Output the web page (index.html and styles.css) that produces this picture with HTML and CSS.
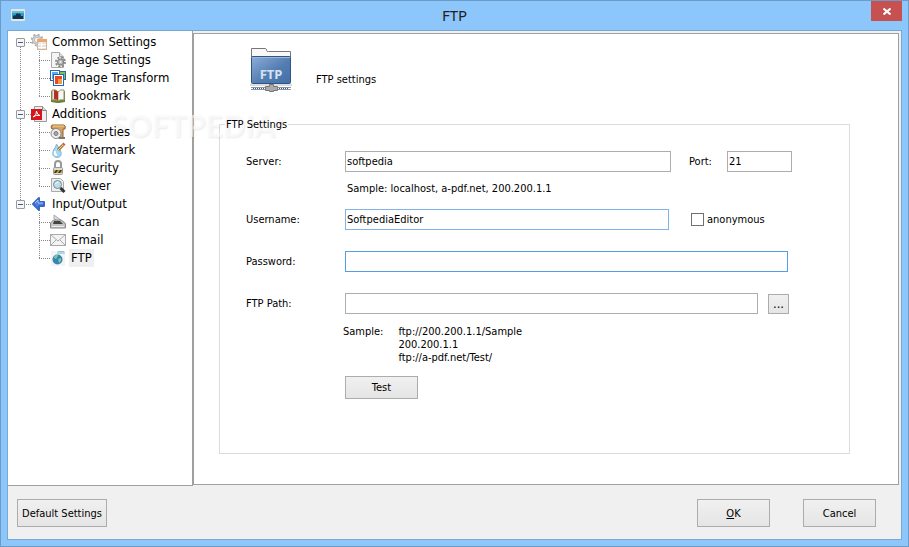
FILE: index.html
```html
<!DOCTYPE html>
<html lang="en">
<head>
<meta charset="utf-8">
<title>FTP</title>
<link rel="stylesheet" href="styles.css">
</head>
<body>
<div class="window">
  <header class="titlebar">
    <svg class="app-icon" viewBox="0 0 14 12"><rect width="14" height="12" rx="1" fill="#e8e6e0"/><rect x="1" y="2" width="12" height="8" fill="#2f9cc8"/><rect x="1" y="2" width="12" height="2" fill="#68bedc"/><path d="M2 10V7l2-1v1l2-3 2 1 1-1 1 3 2 0v3z" fill="#12344d"/></svg>
    <h1 class="title">FTP</h1>
    <button class="close" aria-label="Close"><svg viewBox="0 0 8 7"><path d="M0.500 0.500L7.500 6.500M7.500 0.500L0.500 6.500" stroke="#fff" stroke-width="2"/></svg></button>
  </header>
  <div class="client">
    <div class="main">
      <nav class="tree" aria-label="Settings">
        <ul class="roots">
          <li class="root">
            <div class="row"><span class="toggle"></span><svg class="icon" viewBox="0 0 16 16"><circle cx="6" cy="6" r="5.500" fill="none" stroke="#b0b0b0" stroke-width="2" stroke-dasharray="2 2.300"/><circle cx="6" cy="6" r="3.500" fill="none" stroke="#b5b5b5" stroke-width="3"/><circle cx="6" cy="6" r="3.500" fill="none" stroke="#dcdcdc"/><rect x="6.500" y="5.500" width="9" height="10" fill="#e8e1dc" stroke="#d3b49e"/><rect x="6" y="5" width="10" height="3" fill="#f0a468"/><path d="M7 10.500h8M7 13.500h8M10.500 8v7" stroke="#fff"/></svg><span class="label">Common Settings</span></div>
            <ul class="branch">
              <li class="row"><svg class="icon" viewBox="0 0 16 16"><path d="M1.500 .5h8l4 4v11h-12z" fill="#f4f4f4" stroke="#aaa"/><path d="M9.500 .5v4h4" fill="#ddd" stroke="#aaa"/><circle cx="10.500" cy="10" r="4.500" fill="none" stroke="#888" stroke-width="2" stroke-dasharray="2 1.500"/><circle cx="10.500" cy="10" r="3" fill="#bbb" stroke="#777"/><circle cx="10.500" cy="10" r="1" fill="#eee"/></svg><span class="label">Page Settings</span></li>
              <li class="row"><svg class="icon" viewBox="0 0 16 16"><rect x="8.500" y="1.500" width="7" height="8" fill="#7ac450" stroke="#2b62a8"/><rect x=".5" y=".5" width="9" height="10" fill="#fff" stroke="#2868b0"/><rect x="2" y="2" width="6" height="7" fill="#58aee8"/><rect x="3.500" y="4.500" width="10" height="11" fill="#fff" stroke="#2868b0"/><rect x="5" y="6" width="7" height="8" fill="#e84a26"/><path d="M8 9h4v5H8z" fill="#f79a42"/></svg><span class="label">Image Transform</span></li>
              <li class="row"><svg class="icon" viewBox="0 0 16 16"><path d="M1 3l6 1 1 1 1-1 6-1v11l-6 1H7l-6-1z" fill="#66852f"/><path d="M2 2q4-1 6 2v9q-2-2-6-1z" fill="#e9e7d8" stroke="#998f70"/><path d="M8 4q2-3 6-2v10q-4-1-6 1z" fill="#f8f8ef" stroke="#998f70"/><path d="M4 2q3 0 4 2v9q-1-2-4-2z" fill="#b53024"/></svg><span class="label">Bookmark</span></li>
            </ul>
          </li>
          <li class="root">
            <div class="row"><span class="toggle"></span><svg class="icon" viewBox="0 0 16 16"><path d="M3.500 .5h8l4 4v11h-12z" fill="#eee" stroke="#999"/><path d="M11.500 .5v4h4" fill="#ddd" stroke="#888"/><rect x="0" y="3" width="11" height="11" fill="#d4151b"/><path d="M2 11Q6 9 5.500 5Q6 9 9 9.500Q5 8.500 2 11z" fill="none" stroke="#fff"/></svg><span class="label">Additions</span></div>
            <ul class="branch">
              <li class="row"><svg class="icon" viewBox="0 0 16 16"><path d="M2 1h12q2 1 1 4h-2v9H8V5H2q-2-2 0-4z" fill="#d8a45c" stroke="#8b6230"/><path d="M3 2h11" stroke="#f2cf91"/><circle cx="6" cy="9.500" r="5" fill="#eee" stroke="#888"/><circle cx="6" cy="9.500" r="2" fill="#aaa" stroke="#777"/><path d="M9 14h6" stroke="#777" stroke-width="2"/></svg><span class="label">Properties</span></li>
              <li class="row"><svg class="icon" viewBox="0 0 16 16"><path d="M6.500 2Q6 5 3.500 8Q1 15 7 15.500Q13 15 10.500 8.500z" fill="#a5d6f2" stroke="#7ab4dc"/><path d="M5 9q-1 4 2 4" fill="none" stroke="#fff" stroke-width="2"/><path d="M8 8l5-5" stroke="#a07c38" stroke-width="3"/><path d="M8 8l5-5" stroke="#f4d06c"/><path d="M13 3l1.500-1.500" stroke="#da5d4b" stroke-width="3"/></svg><span class="label">Watermark</span></li>
              <li class="row"><svg class="icon" viewBox="0 0 16 16"><path d="M5 8V4q0-3 3-3t3 3v4" fill="none" stroke="#999" stroke-width="2"/><rect x="3.500" y="7.500" width="9" height="7" rx="1" fill="#dfdccb" stroke="#999"/><path d="M4 10h8v3H4z" fill="#c8a43d"/><path d="M4 13l2-3h2l-2 3zm4 0l2-3h2l-2 3z" fill="#333"/></svg><span class="label">Security</span></li>
              <li class="row"><svg class="icon" viewBox="0 0 16 16"><path d="M1.500 .5h9l3 3v10h-12z" fill="#eee" stroke="#aaa"/><circle cx="7.500" cy="6.500" r="4" fill="#b9dfea" stroke="#7a898f"/><path d="M5.500 6q1-2 3-2" fill="none" stroke="#fff"/><path d="M10.500 10l4 4" stroke="#333" stroke-width="3"/></svg><span class="label">Viewer</span></li>
            </ul>
          </li>
          <li class="root">
            <div class="row"><span class="toggle"></span><svg class="icon" viewBox="0 0 16 16"><path d="M8 2L2 8l6 6v-4h5V6H8z" fill="#4f7fe0" stroke="#3a68c8" stroke-width="2" stroke-linejoin="round"/><path d="M4 7l3-3v3h5" fill="none" stroke="#a7c5fa"/></svg><span class="label">Input/Output</span></div>
            <ul class="branch">
              <li class="row"><svg class="icon" viewBox="0 0 16 16"><path d="M4 5V1l11 8v2z" fill="#dcdcdc" stroke="#aaa"/><path d="M.5 9l3-3h8l4 4v4H.5z" fill="#c4c4c4" stroke="#888"/><path d="M4 7h6l3 3H3z" fill="#444"/><path d="M2 12.500h12" stroke="#eee"/></svg><span class="label">Scan</span></li>
              <li class="row"><svg class="icon" viewBox="0 0 16 16"><rect x=".5" y="2.500" width="15" height="11" fill="#f3f3f3" stroke="#aaa"/><path d="M1 3l7 6 7-6M1 13l5-5M15 13l-5-5" fill="none" stroke="#aaa"/></svg><span class="label">Email</span></li>
              <li class="row"><svg class="icon" viewBox="0 0 16 16"><rect x="1" y="1" width="14" height="15" fill="#f3f3f3"/><circle cx="7.500" cy="9.500" r="5" fill="#3486b0"/><path d="M4 7q2-3 4-2l-1 3-2 1zM8 9l3-1q1 3-2 5z" fill="#7cc4aa"/><path d="M8 4V1.500h6V4M10 2v2M12 2v2" fill="#cfe8f4" stroke="#8fc3df"/></svg><span class="label selected">FTP</span></li>
            </ul>
          </li>
        </ul>
      </nav>
      <main class="panel">
        <div class="banner">
          <svg class="folder" viewBox="0 0 44 46">
            <defs><linearGradient id="blue" x2="1" y2="1"><stop stop-color="#8eaed8"/><stop offset=".55" stop-color="#547eb2"/><stop offset="1" stop-color="#4470a8"/></linearGradient></defs>
            <path d="M2.500 9V.5h14q1 0 1 2 0 1 2 1h22V9z" fill="#f8f8f8" stroke="#777"/>
            <rect x="2.500" y="8.500" width="39" height="27" rx="1" fill="url(#blue)" stroke="#30557f"/><path d="M3 9.500h38" stroke="#9bb8dc"/>
            <path d="M1 37h42" stroke="#ddd" stroke-width="2"/><path d="M2 39.500h40M2 41.500h40" stroke="#8a96a8"/><path d="M4 40.500h36" stroke="#3d5a86" stroke-dasharray="1 1"/>
            <path d="M20.500 36.500h4v2h4v4h-4v1h-4v-1h-4v-4h4z" fill="#aaa" stroke="#777"/>
            <text class="folder-text" x="22" y="31" text-anchor="middle">FTP</text>
          </svg>
          <span>FTP settings</span>
        </div>
        <fieldset class="group">
          <legend>FTP Settings</legend>
          <div class="field"><label for="server">Server:</label><input class="server" id="server" value="softpedia"><label class="port-label" for="port">Port:</label><input class="port" id="port" value="21"></div>
          <p class="hint">Sample: localhost, a-pdf.net, 200.200.1.1</p>
          <div class="field"><label for="user">Username:</label><input class="user" id="user" value="SoftpediaEditor"><label class="check"><input type="checkbox">anonymous</label></div>
          <div class="field"><label for="password">Password:</label><input class="password" id="password" type="password"></div>
          <div class="field"><label for="path">FTP Path:</label><input class="path" id="path"><button class="browse">...</button></div>
          <div class="samples"><span>Sample:</span><p>ftp://200.200.1.1/Sample<br>200.200.1.1<br>ftp://a-pdf.net/Test/</p></div>
          <button class="test">Test</button>
        </fieldset>
      </main>
    </div>
    <footer class="footer"><button class="defaults">Default Settings</button><button class="ok"><u>O</u>K</button><button>Cancel</button></footer>
  </div>
  <div class="watermark" aria-hidden="true">SOFTPEDIA<sup>®</sup></div>
</div>
</body>
</html>
```
FILE: styles.css
```css
* { box-sizing: border-box; }
body { margin: 0; font: 11px/13px "DejaVu Sans Condensed", "DejaVu Sans", sans-serif; font-stretch: condensed; color: #000; }
.window { position: relative; min-height: 100vh; display: flex; flex-direction: column; padding: 0 6px 6px; border: 1px solid #6d9bc7; background: #8cc6fa; }
.titlebar { display: grid; grid-template-columns: 31px 1fr 31px; height: 29px; }
.app-icon { width: 14px; height: 12px; margin: 8px 0 0 4px; }
.title { margin: 0; text-align: center; font: 15px/28px "Noto Sans", sans-serif; color: #222; }
.close { width: 31px; height: 20px; padding: 0; border: 0; background: #c75050; }
.close svg { width: 8px; height: 7px; }
.client { flex: 1; display: flex; flex-direction: column; border: 1px solid #78a9d5; background: #f0f0f0; }
.main { flex: 1; display: flex; }
.tree { width: 185px; border-right: 1px solid #a0a0a0; border-bottom: 1px solid #a0a0a0; background: #fff; padding: 2px 0 0 8px; font-size: 13px; }
.tree ul { margin: 0; padding: 0; list-style: none; }
.row { display: flex; align-items: center; height: 18px; }
.icon { width: 16px; height: 16px; flex: none; }
.label { padding: 0 2px; line-height: 18px; margin-left: 3px; }
.label, legend { position: relative; z-index: 1; }
.selected { background: #f0f0f0; }
.toggle { width: 9px; height: 9px; margin-right: 6px; border: 1px solid #999; border-radius: 1px; background: linear-gradient(#3b5aa8, #3b5aa8) center / 5px 1px no-repeat #f6f6f6; }
.root > .row { background: repeating-linear-gradient(90deg, #888 0 1px, transparent 1px 2px) 10px 9px / 6px 1px no-repeat; }
.root:not(:last-child) { background: repeating-linear-gradient(#888 0 1px, transparent 1px 2px) 4px 14px / 1px 100% no-repeat; }
.root:not(:first-child) > .row { background: repeating-linear-gradient(90deg, #888 0 1px, transparent 1px 2px) 10px 9px / 6px 1px no-repeat, repeating-linear-gradient(#888 0 1px, transparent 1px 2px) 4px 0 / 1px 5px no-repeat; }
.branch .row { padding-left: 34px; background: repeating-linear-gradient(#888 0 1px, transparent 1px 2px) 23px 0 / 1px 18px no-repeat, repeating-linear-gradient(90deg, #888 0 1px, transparent 1px 2px) 23px 9px / 11px 1px no-repeat; }
.branch .row:last-child { background-size: 1px 10px, 11px 1px; }
.panel { flex: 1; margin: 2px 2px 1px 0; padding: 14px 48px 30px 25px; border: 1px solid #a0a0a0; background: #fff; }
.banner { display: flex; align-items: center; gap: 23px; height: 62px; padding-left: 30px; }
.folder { width: 44px; height: 46px; margin-bottom: 16px; }
.folder-text { font: bold 13px "Noto Sans", sans-serif; fill: #d6e2f1; }
.group { margin: 8px 0 0; padding: 20px 26px 54px; min-width: 0; border: 1px solid #dcdcdc; }
legend { margin-left: -21px; padding: 0 1px; }
.field { display: flex; align-items: center; height: 21px; margin-bottom: 21px; }
.field > label:first-child { width: 99px; }
input { height: 21px; border: 1px solid #abadb3; padding: 0 1px 1px; font: inherit; font-stretch: condensed; background: #fff; outline: 0; min-width: 0; }
.server { width: 326px; }
.port-label { margin: 0 15px 0 18px; }
.port { width: 65px; }
.hint { margin: -11px 0 14px 101px; }
.user { width: 324px; border-color: #7eb4ea; }
.check { display: flex; align-items: center; gap: 3px; margin-left: 22px; }
.check input { appearance: none; width: 13px; height: 13px; margin: 0; padding: 0; border-color: #707070; }
.password { width: 443px; border-color: #569de5; }
.path { width: 413px; }
button { border: 1px solid #acacac; background: linear-gradient(#f0f0f0, #e5e5e5); padding: 0; font: inherit; font-stretch: condensed; color: #000; }
.browse { width: 21px; height: 20px; margin-left: 10px; font-size: 13px; }
.samples { display: flex; margin: -10px 0 12px 97px; gap: 15px; }
.samples p { margin: 0; }
.test { width: 73px; height: 23px; margin-left: 99px; }
.footer { display: flex; padding: 13px 25px 12px 9px; gap: 33px; }
.footer button { width: 73px; height: 28px; }
.footer .defaults { width: 90px; margin-right: auto; }
.watermark { position: absolute; left: 110px; top: 106px; font: bold 30px/36px Lato, sans-serif; color: rgba(255,255,255,.6); text-shadow: 1px 1px 2px rgba(0,0,0,.08); pointer-events: none; }
.watermark sup { font-size: 12px; line-height: 0; }
```
